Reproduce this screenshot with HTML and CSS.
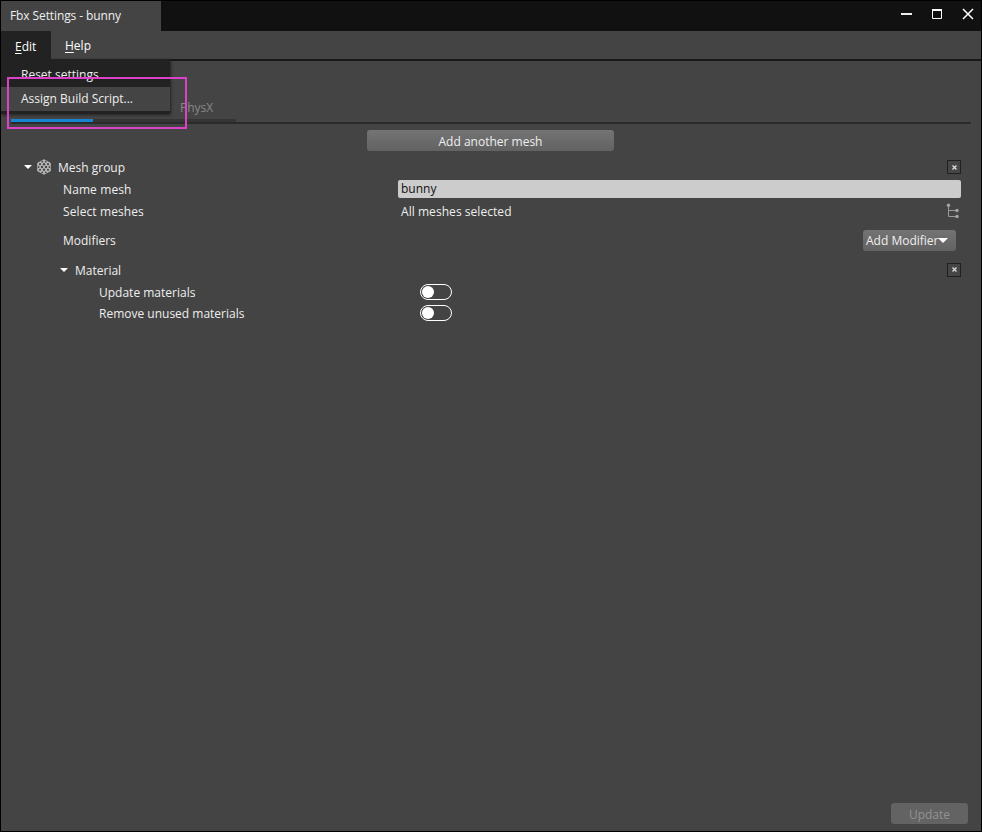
FILE: index.html
```html
<!DOCTYPE html>
<html lang="en">
<head>
<meta charset="utf-8">
<title>Fbx Settings - bunny</title>
<link rel="stylesheet" href="styles.css">
</head>
<body>
<div class="window">
  <header class="titlebar">
    <div class="title"><span class="t-title">Fbx Settings - bunny</span></div>
    <div class="controls">
      <svg width="11" height="14" viewBox="0 0 11 14"><path d="M0 7h11" stroke="#eee" stroke-width="2"/></svg>
      <svg width="12" height="14" viewBox="0 0 12 14"><path d="M1.500 3.500h9v8h-9z" fill="none" stroke="#fff" stroke-width="1"/><path d="M1 3h10" stroke="#fff" stroke-width="2"/></svg>
      <svg width="12" height="14" viewBox="0 0 12 14"><path d="M1 2l10 10M11 2L1 12" stroke="#fff" stroke-width="1.500"/></svg>
    </div>
  </header>
  <nav class="menubar">
    <div class="menu-item open"><span><u>E</u>dit</span>
      <div class="dropdown">
        <div class="option"><span>Reset settings</span></div>
        <div class="option hover"><span>Assign Build Script...</span></div>
      </div>
    </div>
    <div class="menu-item help"><span><u>H</u>elp</span></div>
  </nav>
  <div class="tabs">
    <div class="tab active"></div>
    <div class="tab second"></div>
    <div class="tab physx">PhysX</div>
  </div>
  <main>
    <button class="btn add-mesh"><span>Add another mesh</span></button>
    <div class="row group">
      <svg class="arrow" width="8" height="4" viewBox="0 0 8 4"><path d="M0 0h8L4 4z" fill="#fff"/></svg>
      <svg class="mesh" width="16" height="16" viewBox="0 0 16 16">
        <path d="M8 .3l6.800 3.800v7.800L8 15.700 1.200 11.900V4.100z" fill="#b8b8b8"/>
        <g fill="#484848">
          <circle cx="6.300" cy="2.700" r=".9"/><circle cx="9.700" cy="2.700" r=".9"/>
          <circle cx="4" cy="5.200" r="1.100"/><circle cx="8" cy="5.200" r="1.200"/><circle cx="12" cy="5.200" r="1.100"/>
          <circle cx="2.600" cy="8" r=".9"/><circle cx="6" cy="8" r="1.200"/><circle cx="10" cy="8" r="1.200"/><circle cx="13.400" cy="8" r=".9"/>
          <circle cx="4" cy="10.800" r="1.100"/><circle cx="8" cy="10.800" r="1.200"/><circle cx="12" cy="10.800" r="1.100"/>
          <circle cx="6.300" cy="13.300" r=".9"/><circle cx="9.700" cy="13.300" r=".9"/>
        </g>
      </svg>
      <span class="label">Mesh group</span>
      <span class="close"><svg width="5" height="5" viewBox="0 0 5 5"><path d="M.5.5l4 4M4.500.5l-4 4" stroke="#ddd" stroke-width="1.300"/></svg></span>
    </div>
    <div class="row name"><span class="label">Name mesh</span><div class="input"><span>bunny</span></div></div>
    <div class="row select"><span class="label">Select meshes</span><span class="value">All meshes selected</span>
      <svg class="tree" width="13" height="16" viewBox="0 0 13 16"><path d="M2.500 2v11.500H11M2.500 7.500H11" fill="none" stroke="#999" stroke-width="1"/><g fill="#a5a5a5"><circle cx="2.500" cy="2.300" r="1.700"/><circle cx="11" cy="7.500" r="1.700"/><circle cx="11" cy="13.500" r="1.700"/></g></svg>
    </div>
    <div class="row modifiers"><span class="label">Modifiers</span>
      <button class="btn add-mod"><span>Add Modifier</span><svg width="10" height="5" viewBox="0 0 10 5"><path d="M0 0h10L5 5z" fill="#fff"/></svg></button>
    </div>
    <div class="row material">
      <svg class="arrow" width="8" height="4" viewBox="0 0 8 4"><path d="M0 0h8L4 4z" fill="#fff"/></svg>
      <span class="label">Material</span>
      <span class="close"><svg width="5" height="5" viewBox="0 0 5 5"><path d="M.5.5l4 4M4.500.5l-4 4" stroke="#ddd" stroke-width="1.300"/></svg></span>
    </div>
    <div class="row option-row"><span class="label">Update materials</span><div class="toggle"></div></div>
    <div class="row option-row"><span class="label">Remove unused materials</span><div class="toggle"></div></div>
  </main>
  <footer><button class="btn update" disabled><span>Update</span></button></footer>
  <div class="highlight"></div>
</div>
</body>
</html>
```
FILE: styles.css
```css
* { box-sizing: border-box; }
body { margin: 0; background: #000; }
.window {
  position: relative;
  display: flex;
  flex-direction: column;
  width: 982px;
  height: 832px;
  border: 1px solid #000;
  background: #444;
  color: #eee;
  font: 12px/16px "Open Sans", "Noto Sans", sans-serif;
  white-space: nowrap;
  overflow: hidden;
}
svg { display: block; flex: none; }
.titlebar { display: flex; justify-content: space-between; height: 30px; background: #111; }
.title { width: 160px; padding: 7px 0 0 9px; background: #444; }
.t-title { letter-spacing: -0.1px; }
.controls { display: flex; gap: 19px; padding: 6px 7px 0 0; }
.menubar { display: flex; height: 30px; border-bottom: 2px solid #181818; }
.menu-item { position: relative; width: 50px; padding: 8px 0 0 14px; color: #fff; }
.menu-item.help { padding-top: 7px; }
.menu-item u { text-underline-offset: 2px; }
.open { background: #222; }
.dropdown {
  position: absolute;
  z-index: 2;
  top: 28px;
  left: 0;
  width: 169px;
  height: 55px;
  padding-top: 3px;
  background: #222;
  border-radius: 0 2px 2px 0;
  box-shadow: 1px 1px 3px #222;
  color: #eee;
}
.option { height: 25px; padding: 5px 0 0 20px; }
.option.hover { height: 24px; padding-top: 4px; background: #444; }
.tabs {
  display: flex;
  height: 63px;
  margin: 0 10px;
  border-bottom: 2px solid #2b2b2b;
}
.tab { height: 61px; border-bottom: 3px solid #353535; }
.active { width: 82px; border-color: #1785d0; }
.second { width: 77px; }
.physx { width: 66px; padding: 39px 0 0 10px; color: #888; }
main { flex: 1; display: flex; flex-direction: column; }
.btn {
  display: flex;
  align-items: center;
  justify-content: center;
  padding: 2px 0 0;
  border: 0;
  border-radius: 3px;
  background: linear-gradient(#747474, #626262);
  color: #eee;
  font: inherit;
  letter-spacing: inherit;
}
.add-mesh { width: 247px; height: 21px; margin: 6px 0 5px 366px; padding-top: 3px; }
.row { display: flex; align-items: center; height: 22px; }
.label { padding-top: 1px; }
.group { padding: 0 20px 0 23px; }
.mesh { margin: 0 6px 0 4px; }
.close {
  display: grid;
  place-items: center;
  width: 14px;
  height: 14px;
  margin-left: auto;
  border: 1px solid #202020;
  background: #464646;
}
.name, .select, .modifiers { padding-left: 62px; }
.name .label, .select .label { width: 335px; letter-spacing: 0.1px; }
.input {
  width: 563px;
  height: 18px;
  padding: 1px 3px;
  border-radius: 2px;
  background: #ccc;
  color: #111;
}
.value { padding: 1px 0 0 3px; letter-spacing: 0.05px; }
.tree { margin: 0 22px 0 auto; }
.modifiers { height: 36px; padding-right: 25px; justify-content: space-between; }
.add-mod { width: 93px; height: 21px; justify-content: flex-start; padding-left: 3px; }
.add-mod svg { margin-top: -2px; }
.material { height: 23px; padding: 0 20px 0 59px; }
.material .label { margin-left: 7px; padding-top: 3px; }
.option-row { height: 21px; padding-left: 98px; }
.option-row .label { width: 321px; padding-top: 3px; }
.toggle { width: 32px; height: 16px; padding: 1px; border: 1px solid #fff; border-radius: 8px; }
.toggle::before { content: ""; display: block; width: 12px; height: 12px; border-radius: 50%; background: #fff; }
footer { display: flex; justify-content: flex-end; padding: 0 13px 7px 0; }
.update { width: 77px; height: 21px; padding-top: 3px; background: #636363; color: #929292; }
.highlight {
  position: absolute;
  z-index: 3;
  left: 6px;
  top: 76px;
  width: 180px;
  height: 52px;
  border: 2px solid #dc42c8;
}
```
